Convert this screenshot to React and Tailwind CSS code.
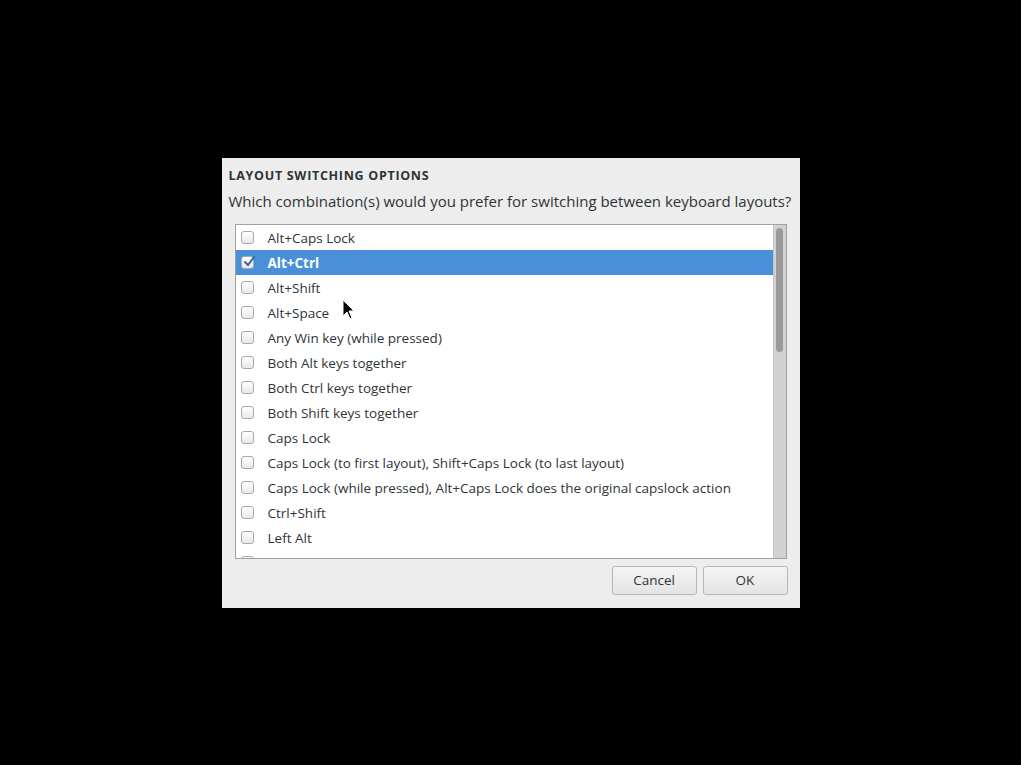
import React from "react";

const items = [
  "Alt+Caps Lock",
  "Alt+Ctrl",
  "Alt+Shift",
  "Alt+Space",
  "Any Win key (while pressed)",
  "Both Alt keys together",
  "Both Ctrl keys together",
  "Both Shift keys together",
  "Caps Lock",
  "Caps Lock (to first layout), Shift+Caps Lock (to last layout)",
  "Caps Lock (while pressed), Alt+Caps Lock does the original capslock action",
  "Ctrl+Shift",
  "Left Alt",
  "",
];

function Check({ checked }) {
  return (
    <div className="relative w-[13px] h-[13px] rounded-[3px] border border-[#a9a9a9] bg-gradient-to-b from-white to-[#e8e8e8] shrink-0">
      {checked && (
        <svg className="absolute left-[1px] top-[-2px]" width="13" height="13" viewBox="0 0 13 13">
          <path d="M2 7 L5 10 L11 2" fill="none" stroke="#3465a4" strokeWidth="2" strokeLinecap="round" strokeLinejoin="round" />
        </svg>
      )}
    </div>
  );
}

export default function App() {
  return (
    <div className="w-[1021px] h-[765px] bg-black flex items-center justify-center relative" style={{ fontFamily: '"Open Sans", "DejaVu Sans", sans-serif' }}>
      <div className="w-[578px] h-[450px] bg-[#ededed] flex flex-col">
        <div className="pl-[7px] pt-[10px] text-[12.5px] font-bold text-[#2e3436] leading-[16px] tracking-[0.7px]">LAYOUT SWITCHING OPTIONS</div>
        <div className="pl-[7px] pt-[7px] text-[15px] text-[#2e3436] leading-[20px]">Which combination(s) would you prefer for switching between keyboard layouts?</div>
        <div className="ml-[13px] mt-[13px] w-[552px] h-[335px] border border-[#a1a1a1] bg-white flex overflow-hidden">
          <div className="flex-1 flex flex-col overflow-hidden">
            {items.map((t, i) => (
              <div key={i} className={`h-[25px] shrink-0 flex items-center pl-[5px] ${i === 1 ? "bg-[#4a90d9] text-white font-bold" : "text-[#2e3436]"}`}>
                <Check checked={i === 1} />
                {t && <span className="ml-[14px] pt-[2px] text-[13.5px] leading-[16px]">{t}</span>}
              </div>
            ))}
          </div>
          <div className="w-[13px] bg-[#d1d1d1] border-l border-[#c4c4c4] pt-[3px] flex justify-center">
            <div className="w-[7px] h-[124px] rounded-full bg-[#9a9a9a]"></div>
          </div>
        </div>
        <div className="flex justify-end gap-[6px] pr-[12px] mt-[7px]">
          <button className="w-[85px] h-[29px] rounded-[3px] border border-[#b6b6b6] bg-gradient-to-b from-[#f4f4f4] to-[#e4e4e4] text-[13.5px] text-[#2e3436]">Cancel</button>
          <button className="w-[85px] h-[29px] rounded-[3px] border border-[#b6b6b6] bg-gradient-to-b from-[#f4f4f4] to-[#e4e4e4] text-[13.5px] text-[#2e3436]">OK</button>
        </div>
      </div>
      <svg className="absolute left-[342px] top-[299px]" width="14" height="22" viewBox="0 0 14 22">
        <path d="M1 1 L1 17 L5 13 L8 20 L10 19 L7 12 L12 12 Z" fill="#000" stroke="#fff" strokeWidth="1" />
      </svg>
    </div>
  );
}
